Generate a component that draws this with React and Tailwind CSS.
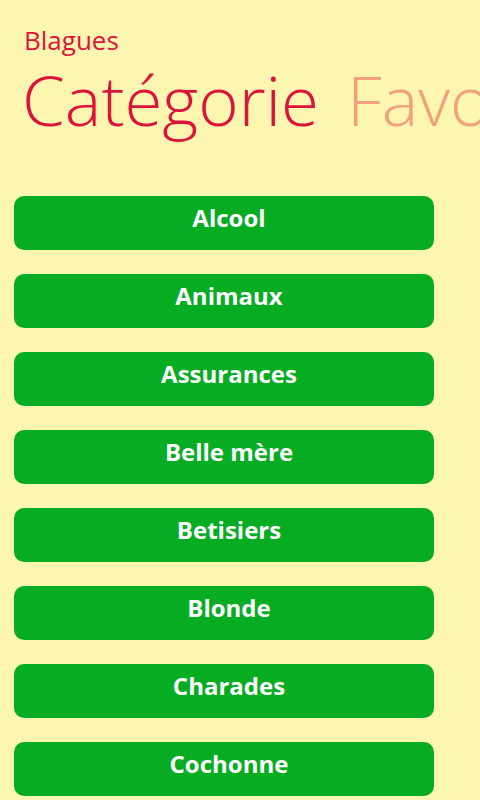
import React from 'react';

const categories = ['Alcool', 'Animaux', 'Assurances', 'Belle mère', 'Betisiers', 'Blonde', 'Charades', 'Cochonne'];

const App = () => {
  return (
    <div className="w-[480px] h-[800px] overflow-hidden bg-[#fdf6b0] font-['Open_Sans',sans-serif]">
      {/* Pivot header */}
      <div className="pt-[23px] pl-[24px]">
        <div className="text-[26px] leading-[34px] text-[#dc143c]">Blagues</div>
        <div className="flex gap-[28px] whitespace-nowrap text-[69px] leading-[84px] font-light -ml-[2px]">
          <span className="text-[#dc143c]">Catégorie</span>
          <span className="text-[#f2a07e]">Favoris</span>
        </div>
      </div>

      {/* Category list */}
      <div className="mt-[55px] pl-[14px] flex flex-col gap-[24px]">
        {categories.map((name) => (
          <button
            key={name}
            className="w-[420px] h-[54px] rounded-[10px] bg-[#06ac22] text-white text-[24px] font-bold pl-[10px] pb-[10px] flex items-center justify-center"
          >
            {name}
          </button>
        ))}
      </div>
    </div>
  );
};

export default App;
